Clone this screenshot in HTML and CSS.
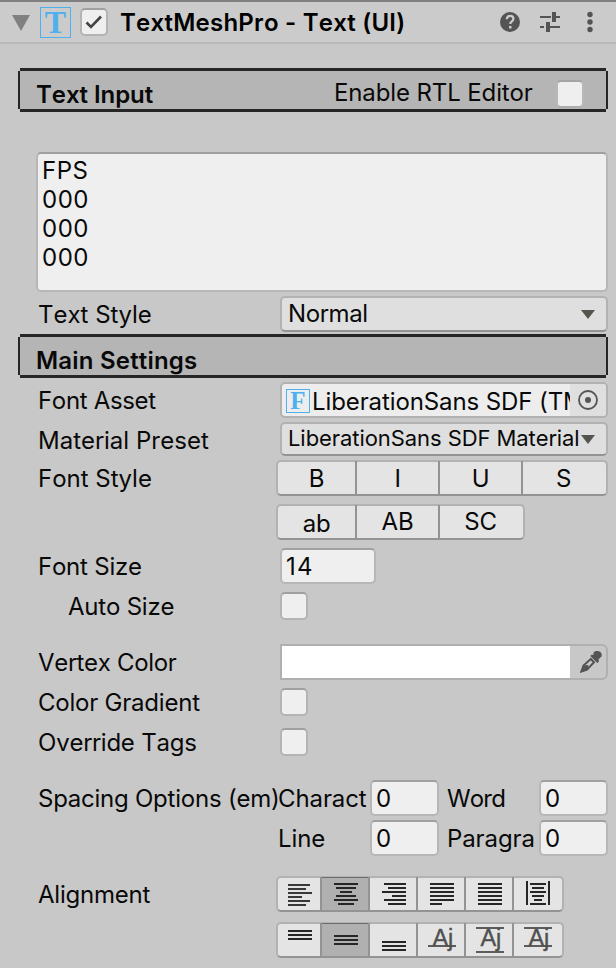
FILE: index.html
```html
<!DOCTYPE html>
<html lang="en">
<head>
<meta charset="utf-8">
<title>Inspector</title>
<link rel="stylesheet" href="styles.css">
</head>
<body>
<header class="header">
  <svg class="fold" width="18" height="16" viewBox="0 0 18 16"><path d="M0 0H18L9 16Z" fill="#808080"/></svg>
  <span class="glyph glyph-t">T</span>
  <span class="check"><svg width="24" height="24" viewBox="0 0 24 24"><path d="M4.500 12.500L9 17L19 6.500" fill="none" stroke="#444" stroke-width="2.600"/></svg></span>
  <h1 class="title">TextMeshPro - Text (UI)</h1>
  <svg class="tools" width="100" height="22" viewBox="0 0 100 22" fill="#545454">
    <circle cx="11" cy="11" r="10"/>
    <path d="M7.800 8.300C8 3.600 14.400 4 14.400 7.900C14.400 10.300 11.200 10.300 11.200 13" fill="none" stroke="#cbcbcb" stroke-width="2.200"/>
    <rect x="10" y="15" width="2.500" height="2.500" fill="#cbcbcb"/>
    <path d="M41 5h11v2H41zM57 5h4v2h-4zM53 1h4v10h-4zM41 15h4v2h-4zM51 15h10v2H51zM47 11h4v10h-4z"/>
    <circle cx="91" cy="3.500" r="2.700"/><circle cx="91" cy="11" r="2.700"/><circle cx="91" cy="18.500" r="2.700"/>
  </svg>
</header>
<main class="panel">
  <section class="band band-input">
    <h2 class="band-title">Text Input</h2>
    <span class="rtl">Enable RTL Editor</span>
    <span class="check flat"></span>
  </section>
  <div class="textarea">FPS<br>000<br>000<br>000</div>
  <div class="row"><span class="label loose">Text Style</span>
    <div class="field select"><span>Normal</span><svg class="arrow" width="14" height="9" viewBox="0 0 14 9"><path d="M0 0H14L7 9Z"/></svg></div></div>
  <section class="band"><h2 class="band-title wide">Main Settings</h2></section>
  <div class="row row-asset"><span class="label tight">Font Asset</span>
    <div class="field object"><span class="glyph glyph-f">F</span><span class="object-name">LiberationSans SDF (TMP_Font Asset)</span>
      <span class="picker"><svg width="22" height="22" viewBox="0 0 22 22"><circle cx="11" cy="11" r="9" fill="none" stroke="#545454" stroke-width="1.800"/><circle cx="11" cy="11" r="3" fill="#545454"/></svg></span></div></div>
  <div class="row row-material"><span class="label loose">Material Preset</span>
    <div class="field select select-small"><span>LiberationSans SDF Material</span><svg class="arrow" width="14" height="9" viewBox="0 0 14 9"><path d="M0 0H14L7 9Z"/></svg></div></div>
  <div class="row row-style"><span class="label loose">Font Style</span>
    <div class="buttons styles"><span>B</span><span>I</span><span>U</span><span>S</span></div></div>
  <div class="row row-case"><span class="label"></span>
    <div class="buttons styles short"><span class="low">ab</span><span>AB</span><span>SC</span></div></div>
  <div class="row row-size"><span class="label">Font Size</span><div class="input size">14</div></div>
  <div class="row row-auto"><span class="label indent">Auto Size</span><span class="check"></span></div>
  <div class="row row-color"><span class="label tight">Vertex Color</span>
    <div class="color"><span class="swatch"></span>
      <svg width="22" height="22" viewBox="0 0 22 22"><path d="M13.500 1.500C17-1.500 23 .5 21.500 5.500L18.700 8.300L18.700 11L17.300 12L10.300 5L11.500 3.700L13.500 3.700Z" fill="#545454"/><path d="M10.800 8L3.500 14.500L1.500 20.500L7 18.700L14 11.300Z" fill="none" stroke="#545454" stroke-width="2"/><path d="M3 14.500L8 14L9 17L6 19.500L0 21.500Z" fill="#545454"/></svg></div></div>
  <div class="row row-check"><span class="label">Color Gradient</span><span class="check"></span></div>
  <div class="row row-check"><span class="label">Override Tags</span><span class="check"></span></div>
  <div class="row row-spacing"><span class="label">Spacing Options (em)</span>
    <span class="sub">Charact</span><div class="input num">0</div><span class="sub second word">Word</span><div class="input num">0</div></div>
  <div class="row row-line"><span class="label"></span>
    <span class="sub">Line</span><div class="input num">0</div><span class="sub second">Paragra</span><div class="input num">0</div></div>
  <div class="row row-align"><span class="label">Alignment</span>
    <div class="buttons icons">
      <span><svg viewBox="0 0 46 32"><path fill="#383838" d="M10 6h22v2H10zM10 10h18v2H10zM10 14h24v2H10zM10 18h14v2H10zM10 22h22v2H10zM10 26h18v2H10z"/></svg></span>
      <span class="on"><svg viewBox="0 0 46 32"><path d="M12 5h24v2H12zM14 9h20v2H14zM18 13h12v2H18zM14 17h20v2H14zM12 21h24v2H12zM16 25h16v2H16z"/></svg></span>
      <span><svg viewBox="0 0 46 32"><path d="M14 5h22v2H14zM18 9h18v2H18zM12 13h24v2H12zM22 17h14v2H22zM14 21h22v2H14zM18 25h18v2H18z"/></svg></span>
      <span><svg viewBox="0 0 46 32"><path d="M12 5h24v2H12zM12 9h24v2H12zM12 13h24v2H12zM12 17h24v2H12zM12 21h24v2H12zM12 25h12v2H12z"/></svg></span>
      <span><svg viewBox="0 0 46 32"><path d="M12 5h24v2H12zM12 9h24v2H12zM12 13h24v2H12zM12 17h24v2H12zM12 21h24v2H12zM12 25h24v2H12z"/></svg></span>
      <span><svg viewBox="0 0 46 32"><path d="M12 3h2v24h-2zM34 3h2v24h-2zM16 5h16v2H16zM18 9h12v2H18zM16 13h16v2H16zM18 17h12v2H18zM20 21h8v2H20zM16 25h16v2H16z"/></svg></span>
    </div></div>
  <div class="row row-valign"><span class="label"></span>
    <div class="buttons icons">
      <span><svg viewBox="0 0 46 32"><path d="M10 6h24v2H10zM10 10h24v2H10zM10 14h24v2H10z"/></svg></span>
      <span class="on"><svg viewBox="0 0 46 32"><path d="M12 11h24v2H12zM12 15h24v2H12zM12 19h24v2H12z"/></svg></span>
      <span><svg viewBox="0 0 46 32"><path d="M12 17h24v2H12zM12 21h24v2H12zM12 25h24v2H12z"/></svg></span>
      <span><svg viewBox="0 0 46 32"><path class="rule" d="M10 21h28v2H10z"/><text x="14.500" y="22">Aj</text></svg></span>
      <span><svg viewBox="0 0 46 32"><path class="rule" d="M10 3h28v2H10zM10 27h28v2H10z"/><text x="14.500" y="22">Aj</text></svg></span>
      <span><svg viewBox="0 0 46 32"><path class="rule" d="M10 3h28v2H10zM10 21h28v2H10z"/><text x="14.500" y="22">Aj</text></svg></span>
    </div></div>
</main>
</body>
</html>
```

FILE: styles.css
```css
* { box-sizing: border-box; }
body {
  margin: 0;
  height: 968px;
  overflow: hidden;
  background: #c8c8c8;
  color: #090909;
  font: 24px/36px Inter, "Liberation Sans", sans-serif;
  font-kerning: none;
  letter-spacing: -0.22px;
  white-space: nowrap;
}
svg { display: block; flex: none; }
h1, h2 { margin: 0; font-size: 24px; font-weight: 600; }

.header {
  display: flex;
  align-items: center;
  height: 44px;
  padding-left: 12px;
  background: #cbcbcb;
  border-top: 2px solid #808080;
  border-bottom: 2px solid #b9b9b9;
}
.fold { margin-top: 2px; }
.glyph {
  flex: none;
  color: #4eb0ee;
  border: 1.500px solid #4eb0ee;
  font-family: "Liberation Serif", serif;
  font-weight: 700;
  text-align: center;
  letter-spacing: 0;
}
.glyph-t { width: 31px; height: 31px; margin: 0 9px 0 10px; font-size: 32px; line-height: 29px; }
.glyph-f { width: 24px; height: 24px; margin: 2px 2px 0 4px; font-size: 25px; line-height: 22px; }
.check {
  flex: none;
  width: 28px;
  height: 28px;
  background: #efefef;
  border: 2px solid #b4b4b4;
  border-top-color: #a0a0a0;
  border-radius: 5px;
}
.title { margin: 2px 0 0 12px; color: #000; letter-spacing: 0.25px; }
.tools { margin-left: auto; margin-right: 17px; }

.panel { padding: 24px 8px 0 18px; }
.band {
  display: flex;
  height: 44px;
  padding-left: 18px;
  margin-top: 2px;
  background:
    linear-gradient(#262626, #262626) 2px 0 / calc(100% - 4px) 3px no-repeat,
    linear-gradient(#262626, #262626) 2px 100% / calc(100% - 4px) 3px no-repeat,
    linear-gradient(#262626, #262626) 0 3px / 2px calc(100% - 6px) no-repeat,
    linear-gradient(#262626, #262626) 100% 3px / 2px calc(100% - 6px) no-repeat,
    linear-gradient(#b5b5b5, #b5b5b5) 2px 0 / calc(100% - 4px) 100% no-repeat;
}
.band-input { margin-top: 0; }
.band-title { width: 298px; line-height: 53px; letter-spacing: -0.05px; }
.wide { letter-spacing: 0.2px; }
.rtl { width: 222px; line-height: 49px; letter-spacing: -0.12px; }
.flat { margin-top: 12px; border-color: #a4a4a4 #b8b8b8 #adadad; }

.textarea {
  height: 140px;
  margin: 40px 0 4px 18px;
  padding: 2px 4px;
  background: #efefef;
  border: 2px solid #b7b7b7;
  border-top-color: #a0a0a0;
  border-radius: 5px;
  line-height: 29px;
  letter-spacing: 0.5px;
}
.row { display: flex; height: 36px; padding-left: 20px; }
.label { flex: none; width: 242px; line-height: 38px; }
.loose { letter-spacing: 0; }
.tight { letter-spacing: -0.33px; }
.indent { padding-left: 30px; }
.field {
  display: flex;
  align-items: center;
  width: 328px;
  height: 36px;
  background: #dfdfdf;
  border: 2px solid #b2b2b2;
  border-bottom-color: #939393;
  border-radius: 5px;
}
.select { justify-content: space-between; padding: 0 11px 0 6px; letter-spacing: -0.35px; }
.arrow { fill: #555550; }
.select-small { height: 34px; font-size: 22px; letter-spacing: -0.07px; line-height: 30px; }
.select-small span { width: 293px; margin-top: -2px; }
.object { background: #ededed; border-bottom-color: #b2b2b2; overflow: hidden; }
.object-name { flex: 1; min-width: 0; margin-top: 3px; overflow: hidden; letter-spacing: -0.1px; }
.picker { display: flex; flex: none; align-items: center; justify-content: center; width: 36px; height: 32px; background: #dfdfdf; }

.row-asset { margin-top: 4px; }
.row-material { margin-top: 4px; }
.row-style { margin-top: 2px; }
.row-case, .row-size { margin-top: 8px; }
.row-auto { margin-top: 4px; }
.row-auto .check, .row-check .check { margin-top: 4px; }
.row-color { margin-top: 20px; }
.row-check { margin-top: 4px; }
.row-spacing { margin-top: 20px; }
.row-line { margin-top: 4px; }
.row-align { margin-top: 20px; }
.row-valign { margin-top: 10px; }

.buttons {
  display: flex;
  flex: none;
  height: 36px;
  margin-left: -4px;
  background: #e4e4e4;
  border: 2px solid #b2b2b2;
  border-bottom-color: #939393;
  border-radius: 5px;
  line-height: 34px;
  text-align: center;
}
.buttons span { height: 32px; }
.buttons span + span { height: 33px; border-left: 2px solid #939393; margin-top: -1px; line-height: 36px; }
.styles { width: 332px; }
.styles span { width: 83px; }
.styles span:first-child { width: 77px; }
.styles span:nth-child(4) { width: 85px; padding-right: 2px; }
.short { width: 249px; }
.buttons .low { line-height: 36px; }
.buttons .low ~ span { line-height: 34px; }
.icons { width: 288px; }
.icons span { width: 48px; }
.icons span:first-child { width: 42px; }
.icons svg { width: 46px; height: 32px; fill: #262626; }
.icons span + span svg { margin-top: 1px; }
.icons .on { background: #b0b0b0; box-shadow: inset 0 1px #6d6d6d; }
.icons .rule { fill: #5c5c5c; }
.icons text { fill: #505050; stroke: #505050; stroke-width: 0.4px; font: 23.500px "Liberation Sans", sans-serif; }

.input {
  flex: none;
  height: 36px;
  padding-left: 4px;
  background: #efefef;
  border: 2px solid #b7b7b7;
  border-top-color: #a0a0a0;
  border-radius: 5px;
  line-height: 34px;
  letter-spacing: 0.3px;
}
.size { width: 96px; letter-spacing: 1.2px; }
.num { width: 69px; }
.sub { flex: none; width: 88px; margin: 0 4px 0 -2px; line-height: 38px; letter-spacing: -0.1px; }
.second { margin: 0 4px 0 8px; }
.word { letter-spacing: -0.9px; }
.color {
  display: flex;
  align-items: center;
  width: 328px;
  height: 36px;
  border: 2px solid #b0b0b0;
  border-radius: 0 6px 6px 0;
}
.swatch { width: 288px; height: 32px; margin-right: 10px; background: #fff; }
```
